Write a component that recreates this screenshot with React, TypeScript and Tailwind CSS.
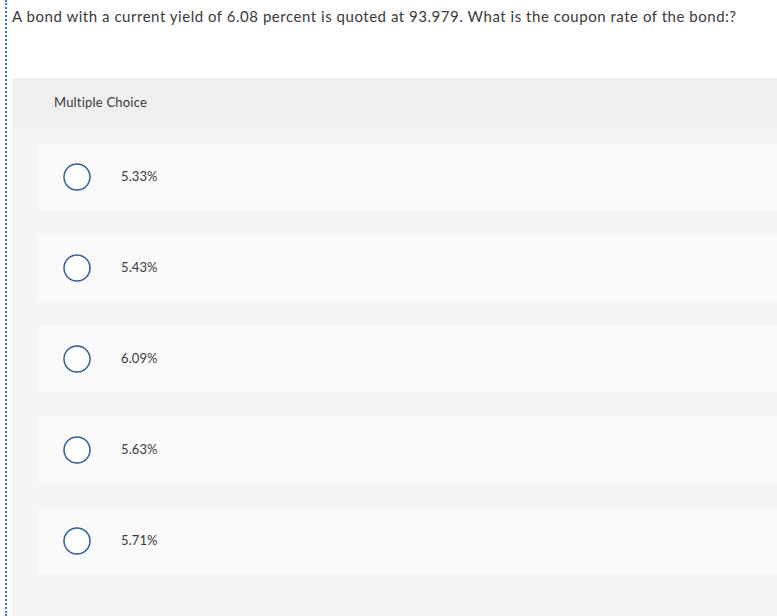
const choices = ['5.33%', '5.43%', '6.09%', '5.63%', '5.71%']

function Radio() {
  return (
    <svg width="28" height="28" viewBox="0 0 28 28" className="shrink-0">
      <circle cx="14" cy="14" r="13" fill="#fff" stroke="#2f5f9c" strokeWidth="1.5" />
    </svg>
  )
}

export default function App() {
  return (
    <div
      className="min-h-[616px] w-[777px] overflow-hidden bg-white text-[#333]"
      style={{fontFamily: 'Lato, "Liberation Sans", sans-serif'}}
    >
      <div className="ml-[5px] flex min-h-[616px] flex-col border-l-2 border-dotted border-[#3a6fc4] pl-[5px]">
        <p className="pt-[6px] text-[15px] leading-5 tracking-[0.53px] text-[#3a3a3a]">
          A bond with a current yield of 6.08 percent is quoted at 93.979. What is the coupon rate of the bond:?
        </p>
        <div className="mt-[52px] flex flex-1 flex-col bg-[#f5f5f5]">
          <div className="flex h-[50px] items-center bg-[#efefef] pl-[42px] text-[13px] tracking-[0.2px] text-[#3a3a3a]">
            Multiple Choice
          </div>
          <div className="flex flex-col gap-[25px] pb-[42px] pl-[26px] pt-[16px]">
            {choices.map(choice => (
              <div key={choice} className="flex h-[66px] items-center rounded-l-[3px] bg-[#fafafa] pl-[25px]">
                <Radio />
                <span className="ml-[30px] text-[13px] tracking-[0.1px] text-[#3a3a3a]">{choice}</span>
              </div>
            ))}
          </div>
        </div>
      </div>
    </div>
  )
}
